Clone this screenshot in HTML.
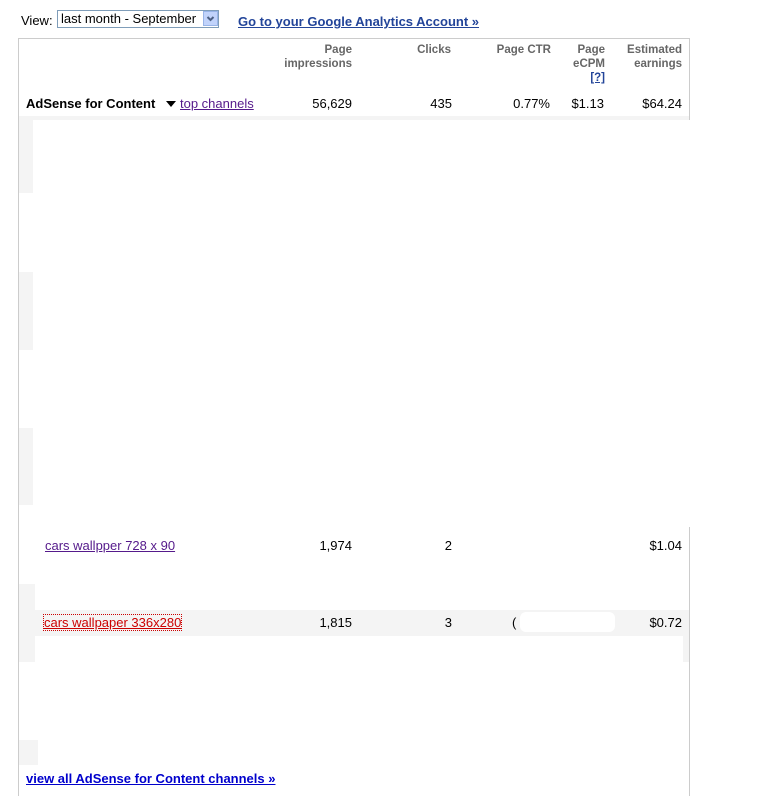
<!DOCTYPE html>
<html><head><meta charset="utf-8"><style>
body{margin:0;width:772px;height:796px;background:#fff;font-family:"Liberation Sans",Arial,sans-serif;position:relative;overflow:hidden}
.a{position:absolute;white-space:nowrap}
.n{font-size:13px;color:#000;text-align:right}
.h{font-size:11.5px;font-weight:bold;color:#666;text-align:right;line-height:14px}
.g{position:absolute;background:#f4f4f4}
</style></head><body>
<div class="a" style="left:21px;top:13px;font-size:13px">View:</div>
<div class="a" style="left:57px;top:10px;width:162px;height:18px;border:1px solid #7f9db9;font-size:13px;line-height:16px;box-sizing:border-box;padding-left:3px">last month - September</div>
<div class="a" style="left:203px;top:11px;width:15px;height:15px;background:#c1d3fb;border:1px solid #98b4e8;box-sizing:border-box"><svg width="13" height="13" style="position:absolute;left:0;top:0"><path d="M3.5 5 L6.5 8 L9.5 5" stroke="#4d6185" stroke-width="2" fill="none"/></svg></div>
<div class="a" style="left:238px;top:14px;font-size:13px;font-weight:bold;color:#224499;text-decoration:underline">Go to your Google Analytics Account »</div>

<div class="a" style="left:18px;top:38px;width:1px;height:758px;background:#ccc"></div>
<div class="a" style="left:18px;top:38px;width:672px;height:1px;background:#ccc"></div>
<div class="a" style="left:689px;top:38px;width:1px;height:82px;background:#ccc"></div>
<div class="a" style="left:689px;top:527px;width:1px;height:269px;background:#ccc"></div>

<div class="a h" style="left:260px;top:43px;width:92px">Page<br>impressions</div>
<div class="a h" style="left:380px;top:43px;width:71px">Clicks</div>
<div class="a h" style="left:480px;top:43px;width:71px">Page CTR</div>
<div class="a h" style="left:540px;top:43px;width:65px">Page<br>eCPM<br><span style="color:#224499;text-decoration:underline">[?]</span></div>
<div class="a h" style="left:600px;top:43px;width:82px">Estimated<br>earnings</div>

<div class="a" style="left:26px;top:96px;font-size:13px;font-weight:bold">AdSense for Content</div>
<svg class="a" style="left:166px;top:101px" width="10" height="6"><path d="M0 0H10L5 6Z" fill="#000"/></svg>
<div class="a" style="left:180px;top:96px;font-size:13px;color:#551a8b;text-decoration:underline">top channels</div>
<div class="a n" style="left:260px;top:96px;width:92px">56,629</div>
<div class="a n" style="left:380px;top:96px;width:72px">435</div>
<div class="a n" style="left:480px;top:96px;width:70px">0.77%</div>
<div class="a n" style="left:540px;top:96px;width:64px">$1.13</div>
<div class="a n" style="left:600px;top:96px;width:82px">$64.24</div>
<div class="g" style="left:19px;top:116px;width:670px;height:4px"></div>

<div class="g" style="left:19px;top:120px;width:14px;height:73px"></div>
<div class="g" style="left:19px;top:272px;width:14px;height:78px"></div>
<div class="g" style="left:19px;top:428px;width:14px;height:77px"></div>

<div class="a" style="left:45px;top:538px;font-size:13px;color:#551a8b;text-decoration:underline">cars wallpper 728 x 90</div>
<div class="a n" style="left:260px;top:538px;width:92px">1,974</div>
<div class="a n" style="left:380px;top:538px;width:72px">2</div>
<div class="a n" style="left:600px;top:538px;width:82px">$1.04</div>

<div class="g" style="left:19px;top:584px;width:16px;height:78px"></div>
<div class="g" style="left:35px;top:610px;width:654px;height:26px"></div>
<div class="g" style="left:683px;top:636px;width:6px;height:26px"></div>
<div class="a" style="left:44px;top:615px;font-size:13px;color:#cc0000;text-decoration:underline;outline:1px dotted #cc0000">cars wallpaper 336x280</div>
<div class="a n" style="left:260px;top:615px;width:92px">1,815</div>
<div class="a n" style="left:380px;top:615px;width:72px">3</div>
<div class="a" style="left:512px;top:615px;font-size:13px">(</div>
<div class="a" style="left:520px;top:612px;width:95px;height:20px;background:#fff;border-radius:6px"></div>
<div class="a n" style="left:600px;top:615px;width:82px">$0.72</div>

<div class="g" style="left:19px;top:740px;width:19px;height:25px"></div>
<div class="a" style="left:26px;top:771px;font-size:13px;font-weight:bold;color:#0000cc;text-decoration:underline">view all AdSense for Content channels »</div>
</body></html>
